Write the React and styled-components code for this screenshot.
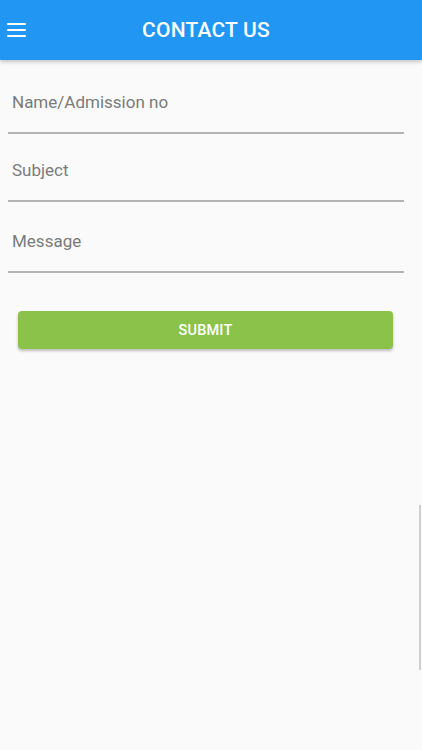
import styled, { createGlobalStyle } from 'styled-components';

const GlobalStyle = createGlobalStyle`
  html, body {
    margin: 0;
    padding: 0;
    background: #fafafa;
  }
  body {
    font-family: Roboto, "Noto Sans", "Liberation Sans", sans-serif;
  }
  * {
    box-sizing: border-box;
  }
`;

const Screen = styled.div`
  width: 422px;
  min-height: 750px;
  background: #fafafa;
  display: flex;
  flex-direction: column;
  position: relative;
  overflow: hidden;
`;

const Toolbar = styled.header`
  height: 60px;
  background: #2196f3;
  display: flex;
  align-items: center;
  position: relative;
  box-shadow: 0 2px 4px rgba(0, 0, 0, 0.22);
  z-index: 1;
`;

const MenuButton = styled.button`
  width: 34px;
  height: 60px;
  padding: 0 0 0 7px;
  border: none;
  background: transparent;
  display: flex;
  flex-direction: column;
  justify-content: center;
  gap: 4px;
  cursor: pointer;

  span {
    display: block;
    width: 19px;
    height: 2px;
    background: #fff;
    border-radius: 1px;
  }
`;

const Title = styled.h1`
  flex: 1;
  margin: 0 44px 0 0;
  text-align: center;
  color: #fff;
  font-size: 21px;
  font-weight: 500;
  letter-spacing: 0.2px;
`;

const Form = styled.form`
  display: flex;
  flex-direction: column;
  padding: 0 18px 0 8px;
`;

const Field = styled.label`
  display: block;
  height: ${({ $height }) => $height}px;
  padding-top: ${({ $top }) => $top}px;
  border-bottom: 2px solid #b3b3b3;
`;

const Input = styled.input`
  width: 100%;
  border: none;
  background: transparent;
  outline: none;
  padding: 0 0 0 4px;
  font-family: inherit;
  font-size: 17px;
  color: #333;

  &::placeholder {
    color: #7a7a7a;
  }
`;

const Submit = styled.button`
  margin: 38px 11px 0 10px;
  height: 38px;
  border: none;
  border-radius: 4px;
  background: #8bc34a;
  color: #fff;
  font-family: inherit;
  font-size: 14.5px;
  font-weight: 500;
  letter-spacing: 0.2px;
  box-shadow: 0 2px 3px rgba(0, 0, 0, 0.25);
  cursor: pointer;
`;

const ScrollTrack = styled.div`
  position: absolute;
  right: 1px;
  top: 505px;
  width: 2px;
  height: 165px;
  background: #d0d0d0;
`;

const fields = [
  { name: 'name', placeholder: 'Name/Admission no', height: 74, top: 32 },
  { name: 'subject', placeholder: 'Subject', height: 68, top: 26 },
  { name: 'message', placeholder: 'Message', height: 71, top: 29 },
];

export default function App() {
  return (
    <>
      <GlobalStyle />
      <Screen>
        <Toolbar>
          <MenuButton type="button" aria-label="menu">
            <span />
            <span />
            <span />
          </MenuButton>
          <Title>CONTACT US</Title>
        </Toolbar>
        <Form onSubmit={(e) => e.preventDefault()}>
          {fields.map((f) => (
            <Field key={f.name} $height={f.height} $top={f.top}>
              <Input name={f.name} placeholder={f.placeholder} />
            </Field>
          ))}
          <Submit type="submit">SUBMIT</Submit>
        </Form>
        <ScrollTrack />
      </Screen>
    </>
  );
}
